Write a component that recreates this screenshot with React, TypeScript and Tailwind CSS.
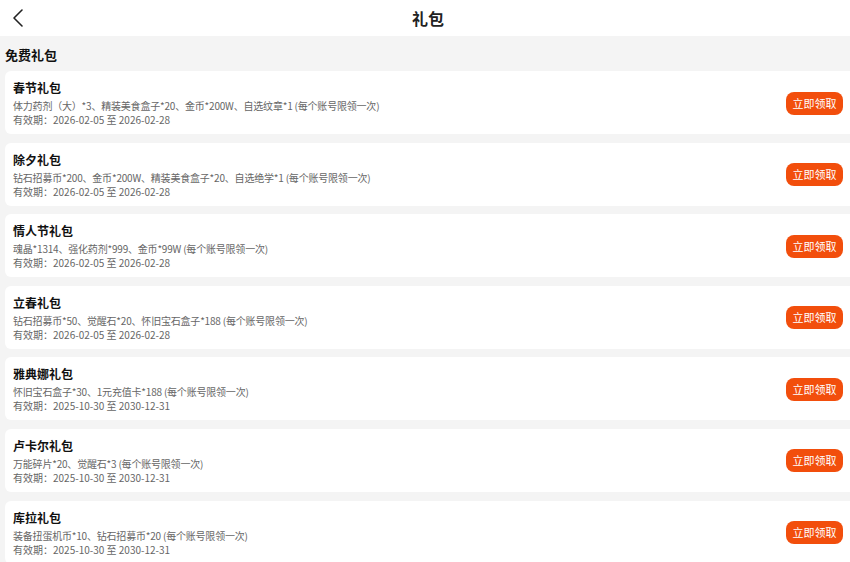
import React from 'react';

type Gift = {
    id: number;
    name: string;
    items: string;
    validity: string;
};

const gifts: Gift[] = [
    { id: 1, name: '春节礼包', items: '体力药剂（大）*3、精装美食盒子*20、金币*200W、自选纹章*1 (每个账号限领一次)', validity: '有效期：2026-02-05 至 2026-02-28' },
    { id: 2, name: '除夕礼包', items: '钻石招募币*200、金币*200W、精装美食盒子*20、自选绝学*1 (每个账号限领一次)', validity: '有效期：2026-02-05 至 2026-02-28' },
    { id: 3, name: '情人节礼包', items: '魂晶*1314、强化药剂*999、金币*99W (每个账号限领一次)', validity: '有效期：2026-02-05 至 2026-02-28' },
    { id: 4, name: '立春礼包', items: '钻石招募币*50、觉醒石*20、怀旧宝石盒子*188 (每个账号限领一次)', validity: '有效期：2026-02-05 至 2026-02-28' },
    { id: 5, name: '雅典娜礼包', items: '怀旧宝石盒子*30、1元充值卡*188 (每个账号限领一次)', validity: '有效期：2025-10-30 至 2030-12-31' },
    { id: 6, name: '卢卡尔礼包', items: '万能碎片*20、觉醒石*3 (每个账号限领一次)', validity: '有效期：2025-10-30 至 2030-12-31' },
    { id: 7, name: '库拉礼包', items: '装备扭蛋机币*10、钻石招募币*20 (每个账号限领一次)', validity: '有效期：2025-10-30 至 2030-12-31' },
];

const GiftCard: React.FC<{ gift: Gift }> = ({ gift }) => (
    <div className="flex items-center justify-between bg-white rounded-l-[6px] pl-2 pr-[7px] pt-2 pb-[7px]">
        <div className="flex flex-col">
            <span className="text-[12px] leading-[18px] font-bold text-[#111] mb-[2px]">{gift.name}</span>
            <span className="text-[10px] leading-[14px] tracking-[-0.2px] text-[#666]">{gift.items}</span>
            <span className="text-[10px] leading-[14px] text-[#666]">{gift.validity}</span>
        </div>
        <button className="h-[23px] w-[57px] rounded-[8px] bg-[#f24e0c] text-white text-[11px] leading-none">
            立即领取
        </button>
    </div>
);

export default function App() {
    return (
        <div className="w-[850px] h-[562px] overflow-hidden bg-[#f4f4f4] font-['Microsoft_YaHei','Noto_Sans_CJK_SC',sans-serif]">
            {/* Header */}
            <div className="relative h-[36px] bg-white flex items-center justify-center">
                <button className="absolute left-[11px] top-[8px] p-0">
                    <svg width="14" height="20" viewBox="0 0 14 20" fill="none">
                        <path d="M11 2 L3 10 L11 18" stroke="#222" strokeWidth="1.6" strokeLinecap="round" strokeLinejoin="round" />
                    </svg>
                </button>
                <h1 className="ml-[6px] text-[16px] font-bold text-[#222]">礼包</h1>
            </div>

            <div className="pl-[5px]">
                <h2 className="text-[13px] leading-[20px] font-bold text-[#111] pt-[9px] pb-[6px]">免费礼包</h2>
                <div className="flex flex-col gap-[8.6px]">
                    {gifts.map((gift) => (
                        <GiftCard key={gift.id} gift={gift} />
                    ))}
                </div>
            </div>
        </div>
    );
}
